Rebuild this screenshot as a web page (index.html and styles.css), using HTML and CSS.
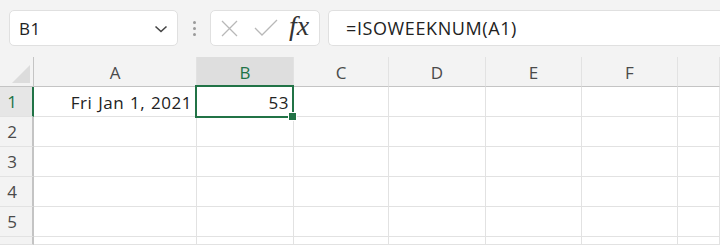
FILE: index.html
```html
<!DOCTYPE html>
<html lang="en">
<head>
    <meta charset="UTF-8">
    <title>ISOWEEKNUM</title>
    <link rel="stylesheet" href="styles.css">
</head>
<body>
<div class="toolbar">
    <div class="namebox">
        <span>B1</span>
        <svg class="chevron" width="14" height="8" viewBox="0 0 14 8"><path d="M1.5 1.5 L7 6.5 L12.5 1.5" fill="none" stroke="#444" stroke-width="1.6"/></svg>
    </div>
    <div class="dots"><i></i><i></i><i></i></div>
    <div class="fxbox">
        <svg width="17" height="17" viewBox="0 0 17 17"><path d="M1 1 L16 16 M16 1 L1 16" stroke="#b8b8b8" stroke-width="1.3"/></svg>
        <svg width="24" height="18" viewBox="0 0 24 18"><path d="M1 9 L8 16 L23 1" fill="none" stroke="#b8b8b8" stroke-width="1.3"/></svg>
        <span class="fx">fx</span>
    </div>
    <div class="formula">=ISOWEEKNUM(A1)</div>
</div>
<div class="sheet">
    <div class="corner"><span class="tri"></span></div>
    <div class="colhead">A</div>
    <div class="colhead active">B</div>
    <div class="colhead">C</div>
    <div class="colhead">D</div>
    <div class="colhead">E</div>
    <div class="colhead">F</div>
    <div class="colhead"></div>

    <div class="rowhead active">1</div>
    <div class="cell num">Fri Jan 1, 2021</div>
    <div class="cell num selected">53<span class="handle"></span></div>
    <div class="cell"></div><div class="cell"></div><div class="cell"></div><div class="cell"></div><div class="cell"></div>

    <div class="rowhead">2</div>
    <div class="cell"></div><div class="cell"></div><div class="cell"></div><div class="cell"></div><div class="cell"></div><div class="cell"></div><div class="cell"></div>

    <div class="rowhead">3</div>
    <div class="cell"></div><div class="cell"></div><div class="cell"></div><div class="cell"></div><div class="cell"></div><div class="cell"></div><div class="cell"></div>

    <div class="rowhead">4</div>
    <div class="cell"></div><div class="cell"></div><div class="cell"></div><div class="cell"></div><div class="cell"></div><div class="cell"></div><div class="cell"></div>

    <div class="rowhead">5</div>
    <div class="cell"></div><div class="cell"></div><div class="cell"></div><div class="cell"></div><div class="cell"></div><div class="cell"></div><div class="cell"></div>

    <div class="rowhead"></div>
    <div class="cell"></div><div class="cell"></div><div class="cell"></div><div class="cell"></div><div class="cell"></div><div class="cell"></div><div class="cell"></div>
</div>
</body>
</html>
```

FILE: styles.css
```css
body{
    margin: 0;
    width: 720px;
    height: 245px;
    overflow: hidden;
    background: #f3f3f3;
    font-family: "Open Sans", "Noto Sans", sans-serif;
    color: #222;
}
.toolbar{
    display: flex;
    align-items: center;
    padding: 10px 0 0 9px;
    height: 36px;
}
.namebox{
    box-sizing: border-box;
    width: 169px;
    height: 36px;
    background: #fff;
    border: 1px solid #e0e0e0;
    border-radius: 5px;
    display: flex;
    align-items: center;
    justify-content: space-between;
    padding: 0 9px 0 9px;
    font-size: 17px;
    letter-spacing: 0.5px;
}
.chevron{
    margin-top: 2px;
}
.dots{
    width: 32px;
    display: flex;
    flex-direction: column;
    align-items: center;
    gap: 3px;
}
.dots i{
    display: block;
    width: 3px;
    height: 3px;
    border-radius: 2px;
    background: #9a9a9a;
}
.fxbox{
    box-sizing: border-box;
    width: 110px;
    height: 36px;
    background: #fff;
    border: 1px solid #e0e0e0;
    border-radius: 5px;
    display: flex;
    align-items: center;
    padding: 0 0 0 10px;
    gap: 16px;
}
.fx{
    font-family: "Liberation Serif", serif;
    font-style: italic;
    font-size: 28px;
    color: #333;
    margin-left: -5px;
    margin-top: -4px;
    letter-spacing: 0;
}
.formula{
    box-sizing: border-box;
    flex: 1;
    height: 36px;
    margin-left: 8px;
    background: #fff;
    border: 1px solid #e0e0e0;
    border-right: none;
    border-radius: 5px 0 0 5px;
    display: flex;
    align-items: center;
    padding-left: 17px;
    font-size: 18px;
    letter-spacing: 0.6px;
}
.sheet{
    margin-top: 11px;
    display: grid;
    grid-template-columns: 34px 163px 97px 95px 97px 96px 96px 1fr;
    grid-template-rows: repeat(6, 30px) 8px;
    font-size: 17px;
}
.corner{
    position: relative;
    border-bottom: 1px solid #c4c4c4;
    border-right: 1px solid #c4c4c4;
}
.tri{
    position: absolute;
    right: 3px;
    bottom: 3px;
    width: 0;
    height: 0;
    border-left: 18px solid transparent;
    border-bottom: 18px solid #dcdcdc;
}
.colhead{
    display: flex;
    align-items: center;
    justify-content: center;
    border-bottom: 1px solid #c4c4c4;
    border-right: 1px solid #e2e2e2;
    color: #4a4a4a;
    font-size: 17px;
    padding-top: 2px;
    box-sizing: border-box;
}
.colhead.active{
    background: #dedede;
    color: #217346;
    border-bottom: 2px solid #217346;
}
.rowhead{
    display: flex;
    align-items: center;
    justify-content: center;
    padding-right: 8px;
    border-right: 2px solid #c4c4c4;
    border-bottom: 1px solid #e2e2e2;
    color: #4a4a4a;
    font-size: 17px;
}
.rowhead.active{
    background: #e6e6e6;
    color: #217346;
    border-right-color: #217346;
}
.cell{
    background: #fff;
    border-right: 1px solid #e2e2e2;
    border-bottom: 1px solid #e2e2e2;
    display: flex;
    align-items: center;
    padding: 2px 4px 0 4px;
}
.num{
    justify-content: flex-end;
    word-spacing: 1px;
    letter-spacing: 0.5px;
}
.selected{
    position: relative;
}
.selected::after{
    content: "";
    position: absolute;
    left: -2px;
    top: -2px;
    right: -1px;
    bottom: -2px;
    border: 2px solid #217346;
}
.handle{
    position: absolute;
    right: -4px;
    bottom: -5px;
    width: 7px;
    height: 7px;
    background: #217346;
    border: 1px solid #fff;
    z-index: 2;
}
```
